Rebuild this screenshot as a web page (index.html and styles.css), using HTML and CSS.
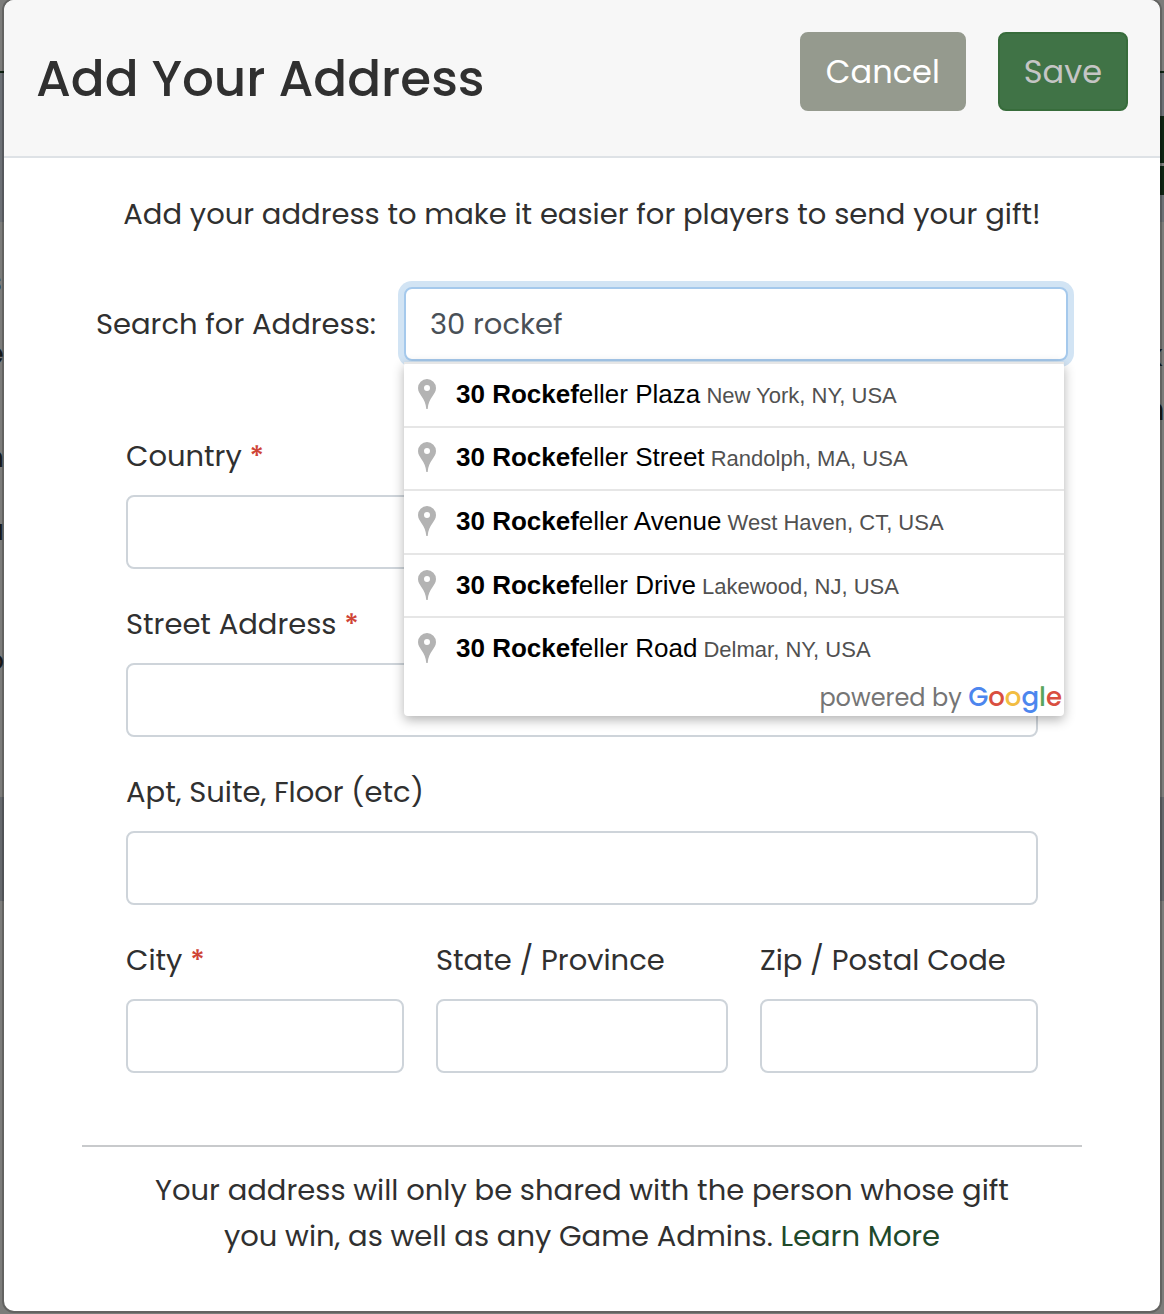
FILE: index.html
```html
<!DOCTYPE html>
<html lang="en">
<head>
    <meta charset="UTF-8">
    <meta name="viewport" content="width=device-width, initial-scale=1.0">
    <title>Add Your Address</title>
    <link rel="stylesheet" href="styles.css">
</head>
<body>
    <div class="page-behind" aria-hidden="true">
        <div class="edge edge-left">
            <b>s</b><b>e</b><span>l</span><span>n</span><span>u</span><span>l</span><span>o</span><span>r</span>
        </div>
        <div class="edge edge-right">
            <b>k</b><b>n</b><b>s</b>
        </div>
    </div>

    <form class="modal" role="dialog" aria-labelledby="modalTitle">
        <header class="modal-header">
            <h1 id="modalTitle">Add Your Address</h1>
            <div class="actions">
                <button type="button" class="btn btn-cancel">Cancel</button>
                <button type="submit" class="btn btn-save" disabled>Save</button>
            </div>
        </header>

        <div class="modal-body">
            <p class="intro">Add your address to make it easier for players to send your gift!</p>

            <div class="search-row">
                <label for="search">Search for Address:</label>
                <div class="search-box">
                    <input type="text" id="search" class="field focused" value="30 rockef" autocomplete="off">
                    <div class="pac-container">
                        <ul class="pac-list">
                            <li class="pac-item">
                                <svg class="pin" viewBox="0 0 18 30"><path fill-rule="evenodd" d="M9 0a9 9 0 0 0-9 9c0 7 7.500 9 8.300 21h1.400C10.500 18 18 16 18 9a9 9 0 0 0-9-9zm0 6a3 3 0 1 1 0 6 3 3 0 0 1 0-6z"/></svg>
                                <div><span class="pac-query"><b>30 Rockef</b>eller Plaza</span> <span>New York, NY, USA</span></div>
                            </li>
                            <li class="pac-item">
                                <svg class="pin" viewBox="0 0 18 30"><path fill-rule="evenodd" d="M9 0a9 9 0 0 0-9 9c0 7 7.500 9 8.300 21h1.400C10.500 18 18 16 18 9a9 9 0 0 0-9-9zm0 6a3 3 0 1 1 0 6 3 3 0 0 1 0-6z"/></svg>
                                <div><span class="pac-query"><b>30 Rockef</b>eller Street</span> <span>Randolph, MA, USA</span></div>
                            </li>
                            <li class="pac-item">
                                <svg class="pin" viewBox="0 0 18 30"><path fill-rule="evenodd" d="M9 0a9 9 0 0 0-9 9c0 7 7.500 9 8.300 21h1.400C10.500 18 18 16 18 9a9 9 0 0 0-9-9zm0 6a3 3 0 1 1 0 6 3 3 0 0 1 0-6z"/></svg>
                                <div><span class="pac-query"><b>30 Rockef</b>eller Avenue</span> <span>West Haven, CT, USA</span></div>
                            </li>
                            <li class="pac-item">
                                <svg class="pin" viewBox="0 0 18 30"><path fill-rule="evenodd" d="M9 0a9 9 0 0 0-9 9c0 7 7.500 9 8.300 21h1.400C10.500 18 18 16 18 9a9 9 0 0 0-9-9zm0 6a3 3 0 1 1 0 6 3 3 0 0 1 0-6z"/></svg>
                                <div><span class="pac-query"><b>30 Rockef</b>eller Drive</span> <span>Lakewood, NJ, USA</span></div>
                            </li>
                            <li class="pac-item">
                                <svg class="pin" viewBox="0 0 18 30"><path fill-rule="evenodd" d="M9 0a9 9 0 0 0-9 9c0 7 7.500 9 8.300 21h1.400C10.500 18 18 16 18 9a9 9 0 0 0-9-9zm0 6a3 3 0 1 1 0 6 3 3 0 0 1 0-6z"/></svg>
                                <div><span class="pac-query"><b>30 Rockef</b>eller Road</span> <span>Delmar, NY, USA</span></div>
                            </li>
                        </ul>
                        <div class="pac-logo">powered by <span class="google"><span class="g-blue">G</span><span class="g-red">o</span><span class="g-yellow">o</span><span class="g-blue">g</span><span class="g-green">l</span><span class="g-red">e</span></span></div>
                    </div>
                </div>
            </div>

            <div class="fields">
                <div class="form-group">
                    <label for="country">Country <span class="required">*</span></label>
                    <input type="text" id="country" class="field" required>
                </div>
                <div class="form-group">
                    <label for="street">Street Address <span class="required">*</span></label>
                    <input type="text" id="street" class="field" required>
                </div>
                <div class="form-group">
                    <label for="apt">Apt, Suite, Floor (etc)</label>
                    <input type="text" id="apt" class="field">
                </div>
                <div class="form-row">
                    <div class="form-group">
                        <label for="city">City <span class="required">*</span></label>
                        <input type="text" id="city" class="field" required>
                    </div>
                    <div class="form-group">
                        <label for="state">State / Province</label>
                        <input type="text" id="state" class="field">
                    </div>
                    <div class="form-group">
                        <label for="zip">Zip / Postal Code</label>
                        <input type="text" id="zip" class="field">
                    </div>
                </div>
            </div>

            <p class="privacy">Your address will only be shared with the person whose gift you win, as well as any Game Admins. <a href="#">Learn More</a></p>
        </div>
    </form>
</body>
</html>
```
FILE: styles.css
```css
* {
    box-sizing: border-box;
}
body {
    margin: 0;
    padding: 0 4px 3px;
    background-color: #7c7c7a;
    color: #303030;
    font-family: Poppins, Inter, sans-serif;
    font-size: 29px;
    line-height: 46px;
}

/* dimmed page under the modal */
.page-behind {
    position: absolute;
    inset: 0;
    display: flex;
    justify-content: space-between;
    overflow: hidden;
}
.edge {
    display: grid;
    align-content: start;
    width: 4px;
    color: #181818;
    background: linear-gradient(#7c7c7a 71px, #0f2413 71px 73px, #6c7075 73px 222px, #7c7c7a 222px 797px, #65686c 797px 901px, #7c7c7a 901px);
}
.edge-left {
    grid-template-rows: 72px 52px 51px 73px 79px 51px 60px 46px;
    justify-content: end;
    padding-top: 259px;
}
.edge-right {
    grid-template-rows: 54px 202px 46px;
    justify-content: end;
    padding-top: 333px;
    background: linear-gradient(#7c7c7a 71px, #0f2413 71px 73px, #6c7075 73px 116px, #0f2413 116px 163px, #7c7c7a 163px 166px, #0f2413 166px 195px, #6c7075 195px 222px, #7c7c7a 222px 797px, #65686c 797px 901px, #7c7c7a 901px);
}

.modal {
    position: relative;
    background-color: #fff;
    border-radius: 10px;
    box-shadow: 0 0 0 2px rgba(0, 0, 0, 0.2);
}
.modal-header {
    display: flex;
    justify-content: space-between;
    align-items: flex-start;
    padding: 32px 32px 39px;
    border-bottom: 2px solid #dee2e6;
    border-radius: 10px 10px 0 0;
    background-color: #f7f7f7;
}
h1 {
    margin: 8px 0 0;
    font-size: 50px;
    font-weight: 500;
    line-height: 77px;
}
.actions {
    display: flex;
    gap: 32px;
}
.btn {
    height: 79px;
    padding: 0 24px;
    border: 2px solid #959a8e;
    border-radius: 8px;
    background-color: #959a8e;
    color: #fff;
    font-family: inherit;
    font-size: 32px;
    font-weight: 400;
}
.btn-save {
    border-color: #376c3b;
    background-color: #407346;
    color: #c5c5c5;
}

.modal-body {
    padding: 33px 78px 52px;
}
.intro {
    margin: 0;
    text-align: center;
}
.search-row {
    display: flex;
    align-items: center;
    gap: 28px;
    margin: 50px 14px 0;
}
.search-row > label {
    white-space: nowrap;
}
.search-box {
    position: relative;
    flex: 1;
}
.field {
    display: block;
    width: 100%;
    height: 74px;
    padding: 0 24px;
    border: 2px solid #ced4da;
    border-radius: 8px;
    background-color: #fff;
    color: #495057;
    font: inherit;
}
.field.focused {
    border-color: #a5c9ec;
    box-shadow: 0 0 0 6px #d2e4f4;
    outline: none;
}

/* autocomplete suggestions */
.pac-container {
    position: absolute;
    z-index: 10;
    top: 100%;
    left: 0;
    right: 4px;
    margin-top: 1px;
    border-radius: 4px;
    background-color: #fff;
    box-shadow: 0 4px 12px rgba(0, 0, 0, 0.3);
    font-family: Arial, "Liberation Sans", sans-serif;
    font-size: 22px;
    color: #515151;
}
.pac-list {
    display: grid;
    grid-auto-rows: 1fr;
    height: 318px;
    margin: 0;
    padding: 0;
    list-style: none;
}
.pac-item {
    display: flex;
    align-items: center;
    gap: 20px;
    padding: 0 8px 0 14px;
    border-top: 2px solid #e6e6e6;
    white-space: nowrap;
}
.pin {
    width: 18px;
    height: 30px;
    margin-bottom: 2px;
    fill: #b3b3b3;
}
.pac-query {
    color: #000;
    font-size: 26px;
}
.pac-logo {
    padding: 0 2px 1px 0;
    color: #757575;
    font-family: Poppins, Lato, sans-serif;
    font-size: 24px;
    line-height: 34px;
    text-align: right;
}
.google {
    font-size: 26px;
    font-weight: 500;
}
.g-blue {
    color: #4c86ee;
}
.g-red {
    color: #d94f40;
}
.g-yellow {
    color: #f2bd42;
}
.g-green {
    color: #58a55c;
}

.fields {
    margin: 72px 44px 0;
}
.form-group {
    margin-bottom: 32px;
}
.form-group label {
    display: block;
    margin-bottom: 16px;
}
.required {
    color: #cf4436;
    font-weight: 500;
}
.form-row {
    display: grid;
    grid-template-columns: 1fr 1.05fr 1fr;
    gap: 32px;
}
.privacy {
    margin: 40px 0 0;
    padding: 20px 60px 0;
    border-top: 2px solid #c8cacc;
    text-align: center;
}
.privacy a {
    color: #20492a;
    text-decoration: none;
}
```
